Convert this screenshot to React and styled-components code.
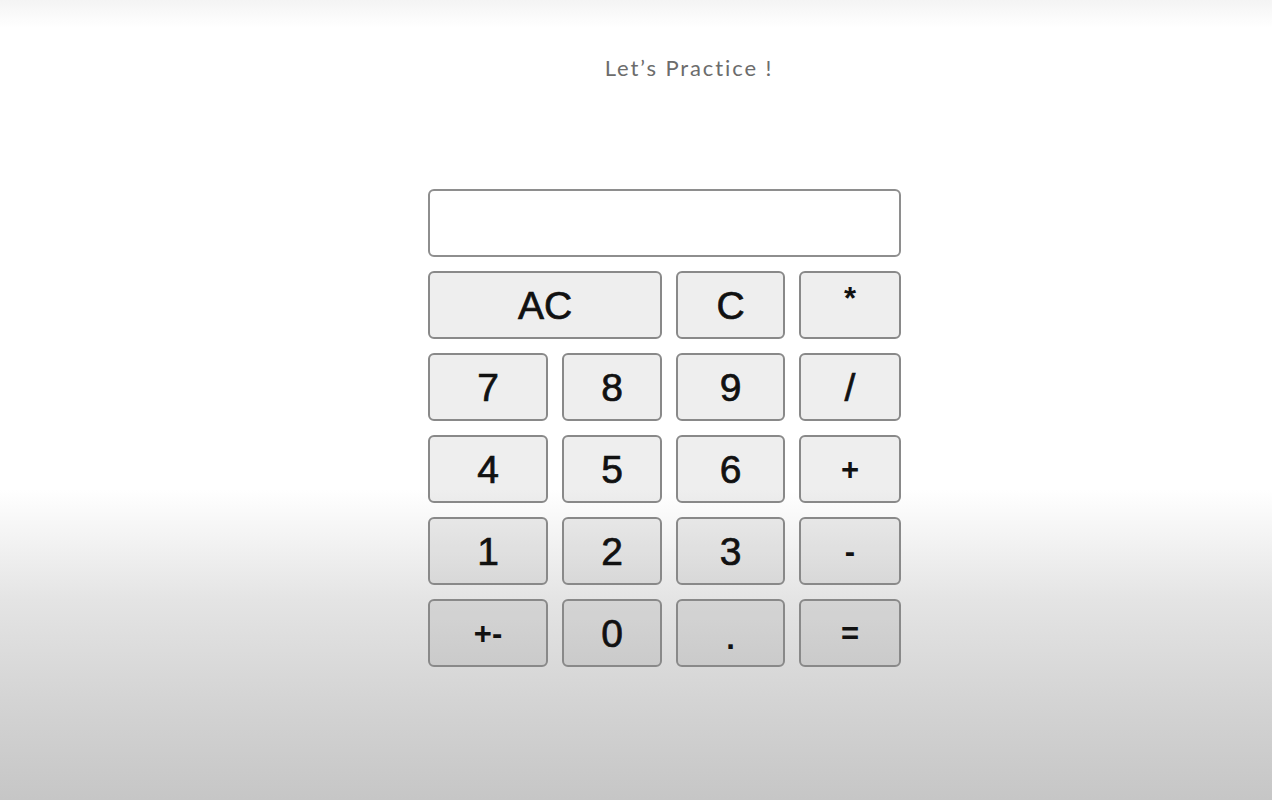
import styled, { createGlobalStyle } from 'styled-components';

const GlobalStyle = createGlobalStyle`
  html, body {
    margin: 0;
    padding: 0;
  }
  body {
    min-height: 100vh;
    background: linear-gradient(
      to bottom,
      #f4f4f4 0px,
      #ffffff 28px,
      #ffffff 490px,
      #e4e4e4 600px,
      #d4d4d4 700px,
      #c6c6c6 800px
    );
    font-family: 'Liberation Sans', Arial, sans-serif;
  }
`;

const Page = styled.div`
  display: flex;
  flex-direction: column;
  align-items: center;
  min-height: 100vh;
`;

const Title = styled.h1`
  margin: 54px 0 0 106px;
  font-family: Lato, 'Open Sans', sans-serif;
  font-weight: 400;
  font-size: 22px;
  line-height: 28px;
  color: #6c6c6c;
  letter-spacing: 1.9px;
`;

const Calculator = styled.div`
  margin-top: 107px;
  margin-left: 57px;
  display: grid;
  grid-template-columns: 120px 100px 109px 102px;
  grid-auto-rows: 68px;
  gap: 14px;
`;

const Display = styled.input`
  grid-column: 1 / -1;
  box-sizing: border-box;
  width: 100%;
  height: 100%;
  border: 2.5px solid #8e8e8e;
  border-radius: 6px;
  background: #ffffff;
  outline: none;
  font-family: 'Liberation Sans', Arial, sans-serif;
  font-size: 36px;
  text-align: right;
  padding: 0 12px;
`;

const Key = styled.button`
  grid-column: span ${({ span }) => span || 1};
  box-sizing: border-box;
  border: 2.5px solid #898989;
  border-radius: 6px;
  background: rgba(0, 0, 0, 0.065);
  color: #111;
  font-family: 'Liberation Sans', Arial, sans-serif;
  font-size: 39px;
  line-height: 1;
  -webkit-text-stroke: 0.7px #111;
  padding: 0;
  display: flex;
  align-items: center;
  justify-content: center;
  cursor: pointer;
`;

const SmallMark = styled.span`
  font-size: 31px;
  font-weight: 700;
  -webkit-text-stroke: 0;
  position: relative;
  top: ${({ lift }) => lift || 0}px;
`;

const keys = [
  { label: 'AC', span: 2 },
  { label: 'C' },
  { label: '*', small: true, lift: -7 },
  { label: '7' },
  { label: '8' },
  { label: '9' },
  { label: '/' },
  { label: '4' },
  { label: '5' },
  { label: '6' },
  { label: '+', small: true },
  { label: '1' },
  { label: '2' },
  { label: '3' },
  { label: '-', small: true },
  { label: '+-', small: true },
  { label: '0' },
  { label: '.', small: true, lift: 5 },
  { label: '=', small: true },
];

export default function App() {
  return (
    <Page>
      <GlobalStyle />
      <Title>Let’s Practice !</Title>
      <Calculator>
        <Display readOnly value="" />
        {keys.map((key) => (
          <Key key={key.label} span={key.span}>
            {key.small ? <SmallMark lift={key.lift}>{key.label}</SmallMark> : key.label}
          </Key>
        ))}
      </Calculator>
    </Page>
  );
}
